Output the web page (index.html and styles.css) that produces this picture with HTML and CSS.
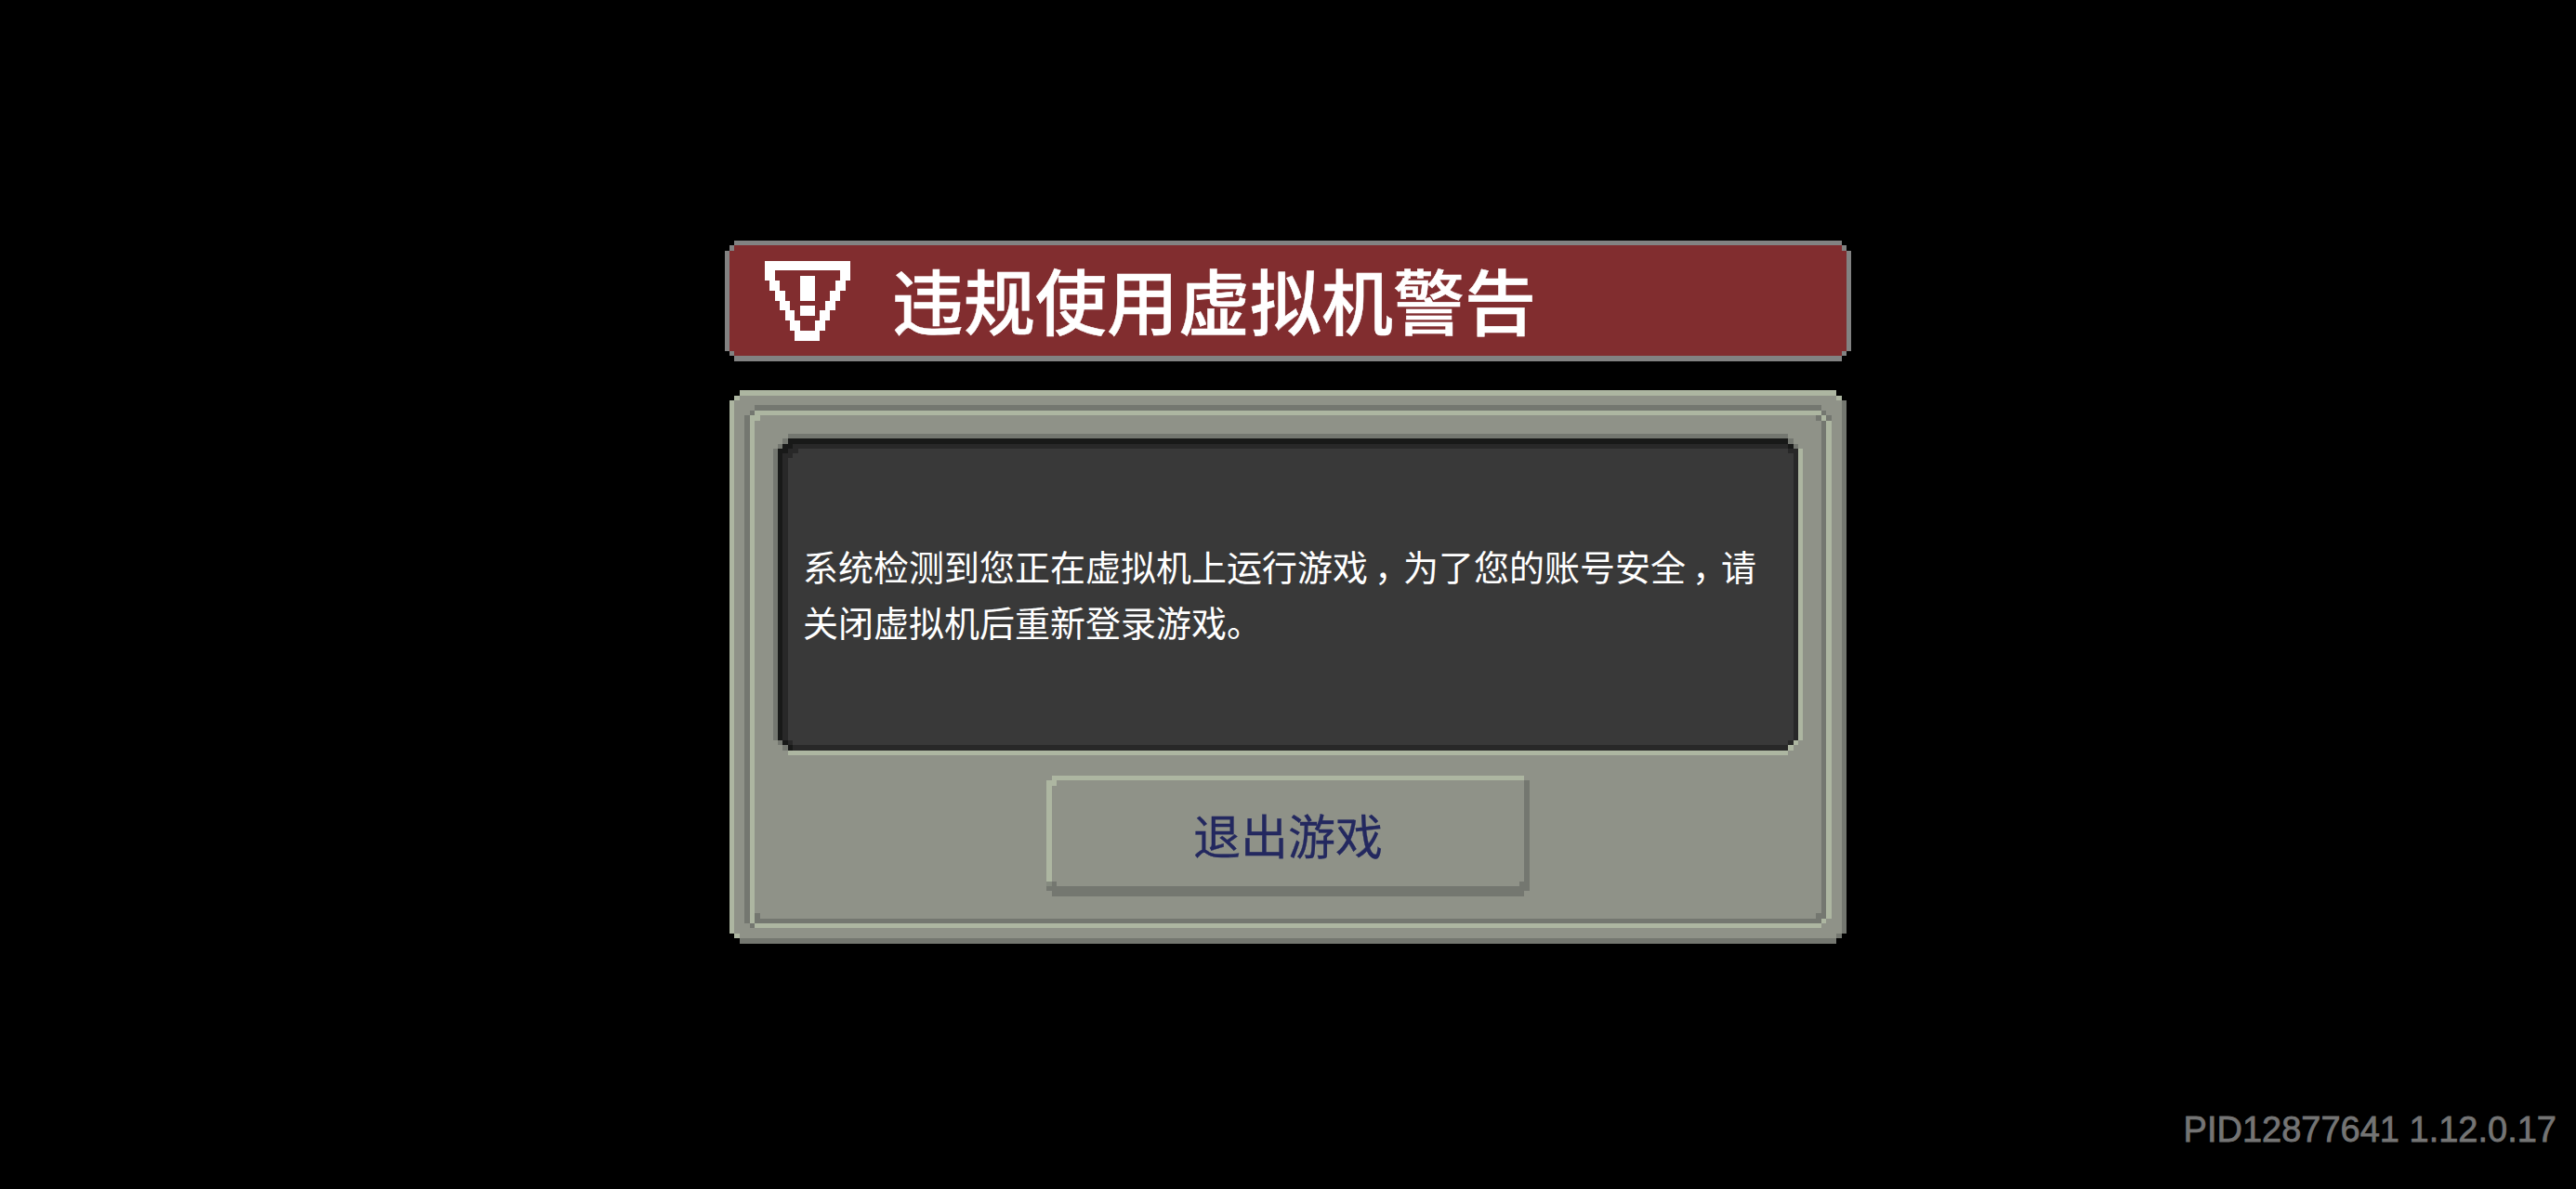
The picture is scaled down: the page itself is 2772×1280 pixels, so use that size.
FILE: index.html
```
<!DOCTYPE html>
<html lang="zh-CN">
<head>
    <meta charset="UTF-8">
    <title>违规使用虚拟机警告</title>
    <link rel="stylesheet" href="styles.css">
</head>
<body>
    <main class="dialog">
        <header class="banner">
            <svg class="frame" viewBox="780 259 1212 130">
                <path fill="#828282" d="M790 259H1982V264H1987V270H1992V378H1987V383H1982V389H790V383H785V378H780V270H785V264H790Z"/>
                <path fill="#812d2f" d="M790 264H1982V270H1987V378H1982V383H790V378H785V270H790Z"/>
            </svg>
            <svg class="warn-icon" viewBox="823 281 92 86">
                <path fill="#fff" fill-rule="evenodd" d="M823 281H915V302H910V313H904V324H899V334H893V345H888V356H882V367H855V356H850V345H845V334H839V324H834V313H828V302H823ZM834 291V302H839V313H845V324H850V334H855V345H861V356H877V345H882V334H888V324H893V313H899V302H904V291Z"/>
                <path fill="#fff" d="M861 297H877V324H861ZM861 329H877V340H861Z"/>
            </svg>
            <h1 class="title">违规使用虚拟机警告</h1>
        </header>

        <section class="panel">
            <svg class="frame" viewBox="785 420 1202 596">
                <path fill="#8f9288" d="M790 426H1982V1010H790Z"/>
                <!-- 外框 -->
                <path fill="#adb6a1" d="M796 420H1976V426H796ZM785 431H790V1005H785ZM790 426H796V431H790ZM790 1005H796V1010H790ZM1976 426H1982V431H1976Z"/>
                <path fill="#747770" d="M1982 431H1987V1005H1982ZM1976 1005H1982V1010H1976ZM796 1010H1976V1016H796Z"/>
                <!-- 内槽 -->
                <path fill="#747770" d="M812 436H1960V442H812ZM801 447H807V994H801ZM807 442H812V447H807ZM807 994H812V999H807ZM812 989H1960V994H812ZM812 983H818V989H812ZM1954 983H1960V989H1954ZM1960 453H1965V989H1960ZM1960 442H1965V447H1960ZM1954 447H1960V453H1954ZM1965 447H1971V453H1965Z"/>
                <path fill="#adb6a1" d="M812 442H1960V447H812ZM812 447H818V453H812ZM807 447H812V994H807ZM812 994H1960V999H812ZM1965 453H1971V989H1965ZM1960 447H1965V453H1960ZM1960 989H1965V994H1960Z"/>
            </svg>

            <div class="screen">
                <svg class="frame" viewBox="832 467 1108 346">
                    <path fill="#747770" d="M848 467H1924V472H1930V478H1935V483H1930V478H1924V472H848V478H842V483H837V797H842V802H848V808H842V802H837V797H832V483H837V478H842V472H848Z"/>
                    <path fill="#adb6a1" d="M1935 483H1940V797H1935V802H1930V808H1924V813H848V808H1924V802H1930V797H1935Z"/>
                    <path fill="#181918" d="M848 472H1924V478H1930V483H1935V797H1930V802H1924V808H848V802H842V797H837V483H842V478H848Z"/>
                    <path fill="#282828" d="M853 478H1924V483H1935V797H1930V802H1924V808H853V802H848V797H842V488H848V483H853Z"/>
                    <path fill="#393939" d="M859 483H1924V488H1930V797H1924V802H853V797H848V493H853V488H859Z"/>
                </svg>
                <p class="message">系统检测到您正在虚拟机上运行游戏<span class="comma">，</span>为了您的账号安全<span class="comma">，</span>请关闭虚拟机后重新登录游戏。</p>
            </div>

            <button class="exit-button">
                <svg class="frame" viewBox="1126 835 520 130">
                    <path fill="#adb6a1" d="M1132 835H1640V840H1132ZM1126 840H1137V846H1132V949H1126Z"/>
                    <path fill="#747770" d="M1640 840H1646V959H1640V965H1132V959H1126V954H1132V949H1137V954H1635V949H1640Z"/>
                    <path fill="#858a7f" d="M1126 949H1132V954H1126Z"/>
                </svg>
                <span class="exit-label">退出游戏</span>
            </button>
        </section>
    </main>

    <footer class="version">PID12877641 1.12.0.17</footer>
</body>
</html>
```

FILE: styles.css
```
* {
    box-sizing: border-box;
}

body {
    margin: 0;
    height: 1280px;
    background: #000;
    color: #fff;
    font-family: "Noto Sans CJK SC", sans-serif;
    display: flex;
    flex-direction: column;
    overflow: hidden;
}

.dialog {
    display: flex;
    flex-direction: column;
    align-items: center;
    gap: 31px;
    padding-top: 259px;
}

/* 像素边框，垫在内容下面 */
.frame {
    position: absolute;
    top: 0;
    left: 0;
    width: 100%;
    height: 100%;
    z-index: -1;
    shape-rendering: crispEdges;
}

.banner {
    position: relative;
    z-index: 0;
    display: flex;
    align-items: center;
    width: 1212px;
    height: 130px;
    padding-left: 43px;
}

.warn-icon {
    width: 92px;
    height: 86px;
    shape-rendering: crispEdges;
}

.title {
    margin: 0 0 0 45px;
    padding-bottom: 5px;
    font-size: 77px;
    font-weight: 500;
    line-height: 125px;
    white-space: nowrap;
    -webkit-text-stroke: 0.5px #fff;
}

.panel {
    position: relative;
    z-index: 0;
    display: flex;
    flex-direction: column;
    align-items: center;
    gap: 22px;
    width: 1202px;
    height: 596px;
    padding-top: 47px;
}

.screen {
    position: relative;
    z-index: 0;
    display: flex;
    align-items: center;
    width: 1108px;
    height: 346px;
    padding: 0 33px 3px 32px;
}

.message {
    margin: 0;
    font-size: 38px;
    line-height: 60px;
}

/* 逗号在字格里居中 */
.comma {
    display: inline-block;
    width: 38px;
    line-height: 1;
    text-indent: 7px;
}

.exit-button {
    position: relative;
    z-index: 0;
    width: 520px;
    height: 130px;
    padding: 0 0 3px;
    border: none;
    background: none;
    color: #23285f;
    font-family: inherit;
    font-size: 51px;
    line-height: 127px;
    -webkit-text-stroke: 0.3px #23285f;
    cursor: pointer;
}

.version {
    margin-top: auto;
    padding: 0 21px 42px 0;
    color: #747474;
    font-family: "Liberation Sans", Arial, sans-serif;
    font-size: 38px;
    line-height: 44px;
    text-align: right;
    -webkit-text-stroke: 0.8px #747474;
}
```
